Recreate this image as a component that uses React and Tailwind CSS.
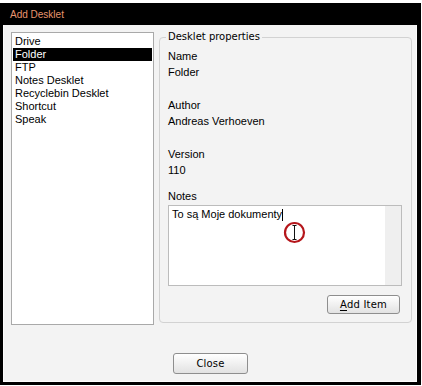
const desklets = ['Drive', 'Folder', 'FTP', 'Notes Desklet', 'Recyclebin Desklet', 'Shortcut', 'Speak'];

const sans = "font-['Liberation_Sans',Arial,sans-serif]";
const dejavu = "font-['DejaVu_Sans',Verdana,sans-serif]";

function Field({ label, value, className = '' }) {
  return (
    <div className={className}>
      <div className="leading-[16px]">{label}</div>
      <div className="leading-[16px]">{value}</div>
    </div>
  );
}

function Button({ children, className = '' }) {
  return (
    <button
      type="button"
      className={`flex items-center justify-center rounded-[3px] border border-[#8e8e8e] bg-linear-to-b from-white to-[#e2e2e2] text-[10px] tracking-[0.2px] text-black ${dejavu} ${className}`}
    >
      {children}
    </button>
  );
}

export default function App() {
  return (
    <div className="h-[386px] w-[422px] bg-white pt-[3px]">
      <div className={`flex h-[382px] w-[421px] flex-col border-b-[3px] border-l-[3px] border-r-[4px] border-black bg-black ${sans}`}>
        {/* title bar */}
        <div className="flex h-[22px] shrink-0 items-center pl-[7px] text-[10px] text-[#e8956f]">Add Desklet</div>

        {/* dialog body */}
        <div className="flex flex-1 flex-col border-x border-b border-[#fcfcfc] bg-[#f3f3f3] pt-[6px] text-[11px] text-black">
          <div className="flex items-start pl-[7px]">
            {/* desklet list */}
            <div className="mt-[1px] h-[293px] w-[143px] border border-[#a9a9a9] bg-white px-px pt-[2px]">
              {desklets.map((d) => (
                <div
                  key={d}
                  className={`h-[13px] px-[2px] leading-[13px] ${d === 'Folder' ? 'bg-black text-white' : ''}`}
                >
                  {d}
                </div>
              ))}
            </div>

            {/* properties group */}
            <fieldset className="ml-[5px] flex h-[292px] w-[253px] flex-col rounded-[4px] border border-[#d2d2d2] pl-[8px] pr-[9px] pt-[5px]">
              <legend className={`-ml-[2px] px-[2px] text-[10px] leading-[12px] ${dejavu}`}>Desklet properties</legend>
              <Field label="Name" value="Folder" />
              <Field label="Author" value="Andreas Verhoeven" className="mt-[17px]" />
              <Field label="Version" value="110" className="mt-[17px]" />
              <div className="mt-[10px] leading-[16px]">Notes</div>

              <div className="relative mt-[1px] flex h-[81px] border border-[#bcbcbc] bg-white">
                <div className="flex flex-1 items-start px-[3px] pt-[2px] leading-[13px]">
                  <span>To są Moje dokumenty</span>
                  <span className="mt-[1px] h-[12px] w-px bg-black" />
                </div>
                <div className="w-[16px] bg-[#efefef]" />
                {/* mouse pointer highlight */}
                <svg className="absolute left-[114px] top-[15px]" width="23" height="23" viewBox="0 0 23 23">
                  <circle cx="11.5" cy="11.5" r="9.5" fill="none" stroke="#b5161b" strokeWidth="2.2" />
                  <path d="M9.5 4.5h4M11.5 4.5v14M9.5 18.5h4" stroke="#111" strokeWidth="1" fill="none" />
                </svg>
              </div>

              <div className="mt-[9px] flex justify-end pr-[2px]">
                <Button className="h-[19px] w-[73px]">
                  <span className="underline underline-offset-[2px]">A</span>dd Item
                </Button>
              </div>
            </fieldset>
          </div>

          <div className="mt-[28px] flex justify-center pl-px">
            <Button className="h-[21px] w-[75px]">Close</Button>
          </div>
        </div>
      </div>
    </div>
  );
}
